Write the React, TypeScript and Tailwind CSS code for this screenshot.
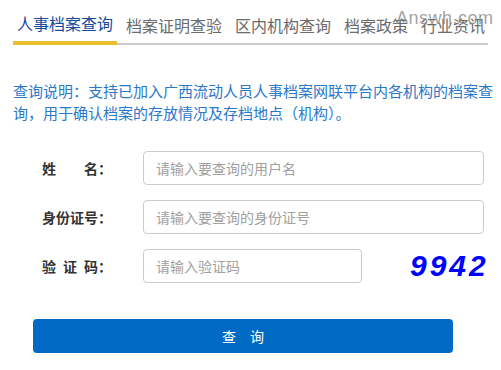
export default function App() {
  const tabs = ["人事档案查询", "档案证明查验", "区内机构查询", "档案政策", "行业资讯"];

  return (
    <div className="relative w-[501px] h-[370px] bg-white font-['Noto_Sans_CJK_SC','Noto_Sans',sans-serif] overflow-hidden">
      {/* tabs */}
      <div className="mx-[13px] mt-[11px] flex items-end gap-[5px] border-b-2 border-[#cccccc]">
        {tabs.map((tab, i) => (
          <div
            key={tab}
            className={
              i === 0
                ? "shrink-0 whitespace-nowrap px-[4px] pb-[6px] -mb-[2px] border-b-4 border-[#e9c12e] text-[16px] leading-[24px] text-[#154a9c]"
                : "shrink-0 whitespace-nowrap px-[4px] pb-[6px] text-[16px] leading-[24px] text-[#6b6b6b]"
            }
          >
            {tab}
          </div>
        ))}
      </div>

      {/* watermark */}
      <div className="absolute left-[396px] top-[6px] text-[18px] leading-[24px] text-[#8a8a8a]/80 font-['Liberation_Sans',sans-serif] tracking-[0.5px]">
        Answh.com
      </div>

      {/* description */}
      <p className="mt-[35px] pl-[13px] pr-[6px] text-[15px] leading-[22px] text-[#2a78c9] whitespace-nowrap">
        查询说明：支持已加入广西流动人员人事档案网联平台内各机构的档案查
        <br />
        询，用于确认档案的存放情况及存档地点（机构）。
      </p>

      {/* form */}
      <div className="mt-[27px] flex flex-col gap-[15px]">
        <div className="flex items-center">
          <div className="w-[112px] text-right text-[14px] font-bold text-[#333333]">姓　　名：</div>
          <input
            className="ml-[31px] w-[341px] h-[34px] rounded-[4px] border border-[#cccccc] px-[12px] text-[14px] placeholder:text-[#a0a0a0] outline-none"
            placeholder="请输入要查询的用户名"
          />
        </div>
        <div className="flex items-center">
          <div className="w-[112px] text-right text-[14px] font-bold text-[#333333]">身份证号：</div>
          <input
            className="ml-[31px] w-[341px] h-[34px] rounded-[4px] border border-[#cccccc] px-[12px] text-[14px] placeholder:text-[#a0a0a0] outline-none"
            placeholder="请输入要查询的身份证号"
          />
        </div>
        <div className="flex items-center">
          <div className="w-[112px] text-right text-[14px] font-bold text-[#333333]">
            <span className="tracking-[7px]">验证</span>码：
          </div>
          <input
            className="ml-[31px] w-[219px] h-[34px] rounded-[4px] border border-[#cccccc] px-[12px] text-[14px] placeholder:text-[#a0a0a0] outline-none"
            placeholder="请输入验证码"
          />
          <div className="ml-[48px] text-[30px] leading-[34px] font-bold italic tracking-[3px] text-[#0000ff] font-['Liberation_Sans',sans-serif]">
            9942
          </div>
        </div>
      </div>

      {/* button */}
      <div className="mt-[36px] ml-[33px] w-[420px] h-[34px] rounded-[4px] bg-[#006ac4] flex items-center justify-center text-[14px] text-white">
        查　询
      </div>
    </div>
  );
}
